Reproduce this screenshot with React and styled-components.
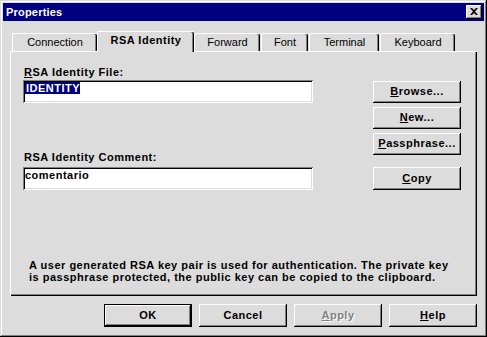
import React from "react";
import styled, { createGlobalStyle } from "styled-components";

const FACE = "#dcdcdc";
const SHADOW = "#808080";

const GlobalStyle = createGlobalStyle`
  html, body {
    margin: 0;
    padding: 0;
    background: ${FACE};
  }
  body {
    font-family: "Liberation Sans", Arial, sans-serif;
    font-size: 11px;
    color: #000;
  }
`;

const Window = styled.div`
  box-sizing: border-box;
  width: 487px;
  height: 337px;
  padding: 3px;
  background: ${FACE};
  box-shadow: inset -1px -1px #000, inset 1px 1px ${FACE},
    inset -2px -2px ${SHADOW}, inset 2px 2px #fff;
  display: flex;
  flex-direction: column;
`;

const TitleBar = styled.div`
  height: 18px;
  background: #000080;
  display: flex;
  align-items: center;
  justify-content: space-between;
  padding: 0 2px 0 3px;
`;

const Title = styled.span`
  color: #fff;
  font-weight: bold;
  font-size: 11px;
  line-height: 13px;
  letter-spacing: 0.2px;
`;

const CloseButton = styled.div`
  width: 16px;
  height: 14px;
  box-sizing: border-box;
  background: ${FACE};
  box-shadow: inset -1px -1px #000, inset 1px 1px #fff,
    inset -2px -2px ${SHADOW}, inset 2px 2px ${FACE};
  display: flex;
  align-items: center;
  justify-content: center;
  padding: 0 1px 1px 0;
`;

const Body = styled.div`
  padding: 10px 7px 0;
  display: flex;
  flex-direction: column;
`;

const TabRow = styled.div`
  display: flex;
  align-items: flex-start;
  height: 20px;
  padding-left: 2px;
  position: relative;
  z-index: 1;
`;

const Tab = styled.div`
  box-sizing: border-box;
  width: ${(p) => p.$w}px;
  margin-left: ${(p) => p.$ml}px;
  margin-top: ${(p) => (p.$active ? 0 : 2)}px;
  height: ${(p) => (p.$active ? 21 : 18)}px;
  background: ${FACE};
  border-top: 1px solid #fff;
  border-left: 1px solid #fff;
  border-top-left-radius: 2px;
  border-top-right-radius: 2px;
  box-shadow: inset -1px 0 #000, inset -2px 0 ${SHADOW};
  display: flex;
  align-items: center;
  justify-content: center;
  padding-bottom: ${(p) => (p.$active ? 3 : 1)}px;
  font-weight: ${(p) => (p.$active ? "bold" : "normal")};
  letter-spacing: ${(p) => (p.$active ? 0.5 : 0)}px;
  line-height: 13px;
  white-space: nowrap;
`;

const Panel = styled.div`
  box-sizing: border-box;
  height: 245px;
  padding: 15px 16px 13px 13px;
  background: ${FACE};
  box-shadow: inset 1px 1px #fff, inset -1px -1px #000,
    inset -2px -2px ${SHADOW};
  display: flex;
  flex-direction: column;
  font-weight: bold;
  letter-spacing: 0.5px;
`;

const TopRow = styled.div`
  display: flex;
  justify-content: space-between;
`;

const FormCol = styled.div`
  width: 290px;
  display: flex;
  flex-direction: column;
`;

const Label = styled.div`
  line-height: 13px;
  padding-left: 1px;
  margin-top: ${(p) => p.$mt || 0}px;
  margin-bottom: ${(p) => p.$mb}px;
`;

const Field = styled.div`
  box-sizing: border-box;
  height: 23px;
  background: #fff;
  padding: 2px 2px 0;
  box-shadow: inset 1px 1px ${SHADOW}, inset -1px -1px #fff,
    inset 2px 2px #000, inset -2px -2px ${FACE};
  line-height: 13px;
  white-space: nowrap;
`;

const Selected = styled.span`
  background: #000080;
  color: #fff;
  padding: 0 0 0 1px;
`;

const ButtonCol = styled.div`
  padding-top: 15px;
  display: flex;
  flex-direction: column;
  gap: 4px;
`;

const Button = styled.div`
  box-sizing: border-box;
  width: ${(p) => p.$w || 88}px;
  height: ${(p) => p.$h || 22}px;
  margin-top: ${(p) => p.$mt || 0}px;
  background: ${FACE};
  box-shadow: ${(p) =>
    p.$default
      ? `inset 0 0 0 1px #000, inset -2px -2px #000, inset 2px 2px #fff, inset -3px -3px ${SHADOW}`
      : `inset -1px -1px #000, inset 1px 1px #fff, inset -2px -2px ${SHADOW}, inset 2px 2px ${FACE}`};
  display: flex;
  align-items: center;
  justify-content: center;
  padding-bottom: 1px;
  font-weight: bold;
  letter-spacing: 0.5px;
  line-height: 13px;
  color: ${(p) => (p.$disabled ? SHADOW : "#000")};
  text-shadow: ${(p) => (p.$disabled ? "1px 1px #fff" : "none")};
  white-space: nowrap;
`;

const Note = styled.p`
  margin: auto 0 0 6px;
  line-height: 12px;
`;

const Footer = styled.div`
  margin-top: 8px;
  display: flex;
  justify-content: flex-end;
  gap: 7px;
`;

const tabs = [
  { label: "Connection", w: 85, ml: 0 },
  { label: "RSA Identity", w: 97, ml: 0, active: true },
  { label: "Forward", w: 66, ml: 0 },
  { label: "Font", w: 47, ml: 1 },
  { label: "Terminal", w: 70, ml: 1 },
  { label: "Keyboard", w: 75, ml: 1 },
];

const Key = ({ k, rest }) => (
  <>
    <u>{k}</u>
    {rest}
  </>
);

export default function App() {
  return (
    <>
      <GlobalStyle />
      <Window>
        <TitleBar>
          <Title>Properties</Title>
          <CloseButton>
            <svg width="8" height="7" viewBox="0 0 8 7">
              <path
                d="M0 0h2l2 2 2-2h2L5 3.5 8 7H6L4 5 2 7H0l3-3.5z"
                fill="#000"
              />
            </svg>
          </CloseButton>
        </TitleBar>
        <Body>
          <TabRow>
            {tabs.map((t) => (
              <Tab key={t.label} $w={t.w} $ml={t.ml} $active={t.active}>
                {t.label}
              </Tab>
            ))}
          </TabRow>
          <Panel>
            <TopRow>
              <FormCol>
                <Label $mb={1}>
                  <Key k="R" rest="SA Identity File:" />
                </Label>
                <Field>
                  <Selected>IDENTITY</Selected>
                </Field>
                <Label $mt={48} $mb={3}>
                  RSA Identity Comment:
                </Label>
                <Field>comentario</Field>
              </FormCol>
              <ButtonCol>
                <Button>
                  <Key k="B" rest="rowse..." />
                </Button>
                <Button>
                  <Key k="N" rest="ew..." />
                </Button>
                <Button>
                  <Key k="P" rest="assphrase..." />
                </Button>
                <Button $mt={8} $h={23}>
                  <Key k="C" rest="opy" />
                </Button>
              </ButtonCol>
            </TopRow>
            <Note>
              A user generated RSA key pair is used for authentication. The
              private key
              <br />
              is passphrase protected, the public key can be copied to the
              clipboard.
            </Note>
          </Panel>
          <Footer>
            <Button $h={23} $default>
              OK
            </Button>
            <Button $h={23}>Cancel</Button>
            <Button $h={23} $disabled>
              <Key k="A" rest="pply" />
            </Button>
            <Button $h={23}>
              <Key k="H" rest="elp" />
            </Button>
          </Footer>
        </Body>
      </Window>
    </>
  );
}
